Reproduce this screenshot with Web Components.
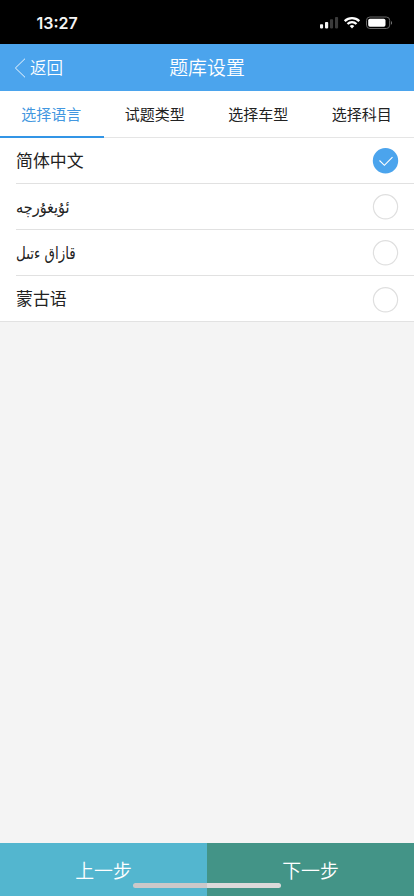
<!DOCTYPE html>
<html lang="zh-CN">
<head>
<meta charset="utf-8">
<title>题库设置</title>
<style>
html, body { margin: 0; height: 100%; }
body { font-family: "Noto Sans CJK SC", sans-serif; background: #f4f4f4; overflow: hidden; }
</style>
</head>
<body>
<settings-page></settings-page>
<script>
const define = (name, html) => {
  const template = document.createElement('template');
  template.innerHTML = html;
  customElements.define(name, class extends HTMLElement {
    constructor() {
      super();
      this.attachShadow({ mode: 'open' }).append(template.content.cloneNode(true));
    }
  });
};

define('status-bar', `
<style>
:host { display: flex; height: 44px; background: #000; color: #f4f4f4; justify-content: space-between; box-sizing: border-box; padding: 0 21px 0 36.5px; }
time { font: 600 16px/46px Inter, sans-serif; }
svg { display: block; }
</style>
<time>13:27</time>
<svg width="74" height="44" viewBox="319 0 74 44">
  <g fill="#f4f4f4"><rect x="320" y="24.2" width="3.1" height="4.2" rx=".8"/><rect x="325" y="22" width="3.2" height="6.4" rx=".8"/></g>
  <g fill="#3b3b3b"><rect x="330" y="19.3" width="3.1" height="9.1" rx=".8"/><rect x="335" y="17" width="3.1" height="11.4" rx=".8"/></g>
  <g fill="none" stroke="#fff" stroke-width="2.3"><path d="M344.7 21.1a10.4 10.4 0 0 1 14.6 0"/><path d="M347.5 24a6.4 6.4 0 0 1 9 0"/></g>
  <path d="M349.7 26a3.4 3.4 0 0 1 4.6 0L352 28.5z" fill="#fff"/>
  <rect x="366.5" y="17" width="23.2" height="11.5" rx="3.4" fill="none" stroke="#686868"/>
  <rect x="368.2" y="18.7" width="17.3" height="8.1" rx="1.7" fill="#fff"/>
  <path d="M391 21v3.8c1.4-.6 1.4-3.2 0-3.8z" fill="#777"/>
</svg>`);

define('nav-bar', `
<style>
:host { display: grid; grid-template-columns: 1fr auto 1fr; align-items: center; height: 47px; background: #4ba4ed; color: #fff; box-sizing: border-box; font-weight: 350; }
.back { display: flex; align-items: center; font-size: 16.5px; padding-left: 14px; gap: 4px; line-height: 47px; }
.title { font-size: 18.9px; line-height: 45px; padding-bottom: 2px; }
</style>
<div class="back"><svg width="12" height="20" viewBox="0 0 12 20" fill="none" stroke="#fff" stroke-width=".9"><path d="M11 .7 1.4 10 11 19.3"/></svg><span>返回</span></div>
<div class="title"><slot></slot></div><div></div>`);

define('tab-bar', `
<style>
:host { display: flex; height: 47px; background: #fff; box-sizing: border-box; border-bottom: 1px solid #e5e5e5; }
</style><slot></slot>`);

define('tab-item', `
<style>
:host { flex: 1; height: 47px; box-sizing: border-box; text-align: center; font-size: 15px; line-height: 46px; color: #222; border-bottom: 2px solid transparent; padding-right: 1px; }
:host([active]) { color: #4297e0; border-color: #3295e6; }
</style><slot></slot>`);

define('option-list', `
<style>
:host { display: block; background: #fff; border-bottom: 1px solid #e2e2e2; }
</style><slot></slot>`);

define('option-row', `
<style>
:host { display: block; height: 46px; padding-left: 16px; }
:host(:last-child) { height: 45px; }
.row { display: flex; height: 100%; box-sizing: border-box; align-items: center; justify-content: space-between; border-bottom: 1px solid #e1e1e1; padding-right: 15px; color: #222; }
:host(:last-child) .row { border: 0; padding-top: 1px; }
.label { font-size: 16.9px; line-height: 42px; padding-bottom: 2px; }
:host([script=arabic]) .label { font-family: "DejaVu Sans", sans-serif; font-size: 17px; line-height: 44px; padding: 0; transform: scaleX(var(--condense, 1)); transform-origin: left; }
svg { display: block; }
.on { display: none; }
:host([checked]) .on { display: inline; }
:host([checked]) .off { display: none; }
</style>
<div class="row"><span class="label"><slot></slot></span>
<svg width="27" height="27" viewBox="0 -.3 27 27" fill="none">
<circle class="off" cx="13.5" cy="13.5" r="12.1" stroke="#dfdfdf" stroke-width="1.2"/>
<g class="on"><circle cx="13.5" cy="13.5" r="12.7" fill="#4ba4ed"/><path d="m7.5 13.2 4.9 4.8 8.1-8.1" stroke="#fff" stroke-width="1.1"/></g>
</svg></div>`);

define('step-footer', `
<style>
:host { display: flex; height: 53px; position: relative; }
.home { position: absolute; left: 133px; bottom: 8px; width: 148px; height: 5px; border-radius: 3px; background: linear-gradient(90deg, #cbc8c9 50%, #dcdada 50%); }
</style><slot></slot><div class="home"></div>`);

define('step-button', `
<style>
:host { flex: 1; text-align: center; font-size: 18.9px; line-height: 53px; font-weight: 350; color: #fff; background: #53b6cf; }
:host([next]) { background: #439487; }
</style><slot></slot>`);

define('settings-page', `
<style>
:host { display: flex; flex-direction: column; height: 896px; background: #f4f4f4; }
main { flex: 1; }
.uyghur { --condense: .85; }
.kazakh { --condense: .79; }
</style>
<status-bar></status-bar>
<nav-bar>题库设置</nav-bar>
<tab-bar><tab-item active>选择语言</tab-item><tab-item>试题类型</tab-item><tab-item>选择车型</tab-item><tab-item>选择科目</tab-item></tab-bar>
<main><option-list>
<option-row checked>简体中文</option-row>
<option-row class="uyghur" script="arabic" lang="ug">ئۇيغۇرچە</option-row>
<option-row class="kazakh" script="arabic" lang="kk">قازاق ءتىل</option-row>
<option-row>蒙古语</option-row>
</option-list></main>
<step-footer><step-button>上一步</step-button><step-button next>下一步</step-button></step-footer>`);
</script>
</body>
</html>
